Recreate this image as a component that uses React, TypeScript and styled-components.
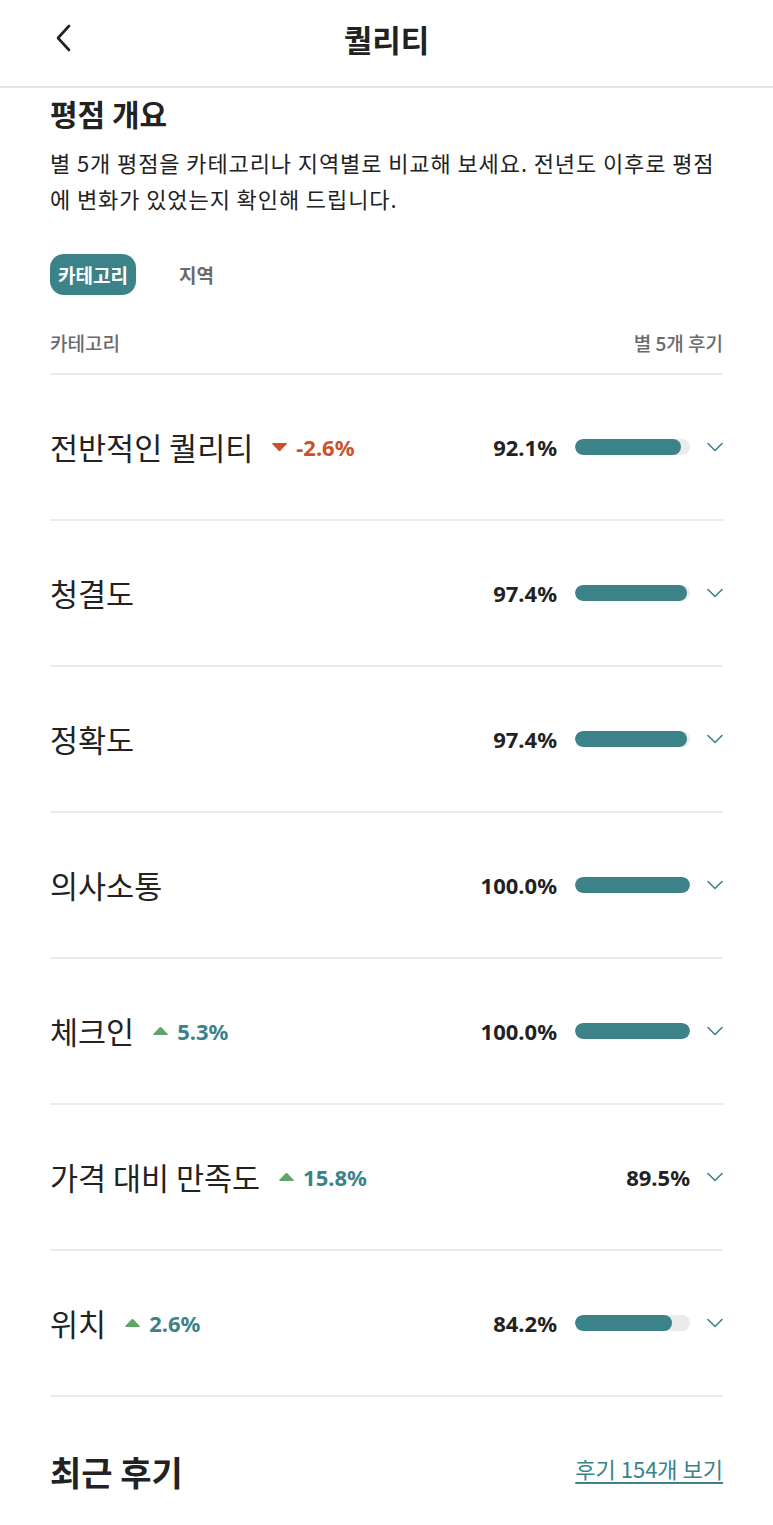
import React from "react";
import styled, { createGlobalStyle } from "styled-components";

const GlobalStyle = createGlobalStyle`
    html, body {
        margin: 0;
        padding: 0;
        background: #ffffff;
    }
    body {
        font-family: "Noto Sans CJK KR", "Noto Sans", sans-serif;
        color: #222222;
    }
`;

const TEAL = "#3b8388";

interface RatingRow {
    label: string;
    percent: number;
    change?: number;
    showBar?: boolean;
}

const rows: RatingRow[] = [
    { label: "전반적인 퀄리티", percent: 92.1, change: -2.6 },
    { label: "청결도", percent: 97.4 },
    { label: "정확도", percent: 97.4 },
    { label: "의사소통", percent: 100.0 },
    { label: "체크인", percent: 100.0, change: 5.3 },
    { label: "가격 대비 만족도", percent: 89.5, change: 15.8, showBar: false },
    { label: "위치", percent: 84.2, change: 2.6 },
];

const Page = styled.div`
    width: 773px;
    min-height: 1525px;
    background: #fff;
`;

const Header = styled.header`
    height: 86px;
    border-bottom: 2px solid #e2e2e2;
    display: flex;
    align-items: center;
    justify-content: center;
    position: relative;
`;

const BackButton = styled.button`
    position: absolute;
    left: 48px;
    top: 22px;
    width: 32px;
    height: 32px;
    border: none;
    background: none;
    padding: 0;
    display: flex;
    align-items: center;
    justify-content: center;
`;

const Title = styled.h1`
    margin: 0 0 10px;
    font-size: 31px;
    font-weight: 700;
    color: #222;
`;

const Content = styled.main`
    padding: 0 50px;
`;

const SectionTitle = styled.h2`
    margin: 4px 0 0;
    font-size: 30px;
    font-weight: 700;
    line-height: 42px;
`;

const Description = styled.p`
    margin: 10px 0 0;
    font-size: 22px;
    letter-spacing: 0.9px;
    line-height: 36px;
    color: #222;
`;

const Tabs = styled.div`
    display: flex;
    align-items: center;
    gap: 43px;
    margin-top: 38px;
`;

const Tab = styled.button<{ $active?: boolean }>`
    border: none;
    font-family: inherit;
    font-size: 19px;
    font-weight: 700;
    height: 41px;
    padding: 0 ${(p) => (p.$active ? "8px" : "0")};
    border-radius: 14px;
    background: ${(p) => (p.$active ? TEAL : "transparent")};
    color: ${(p) => (p.$active ? "#fff" : "#6a6a6a")};
`;

const ColumnHeader = styled.div`
    display: flex;
    justify-content: space-between;
    align-items: center;
    margin-top: 34px;
    padding-bottom: 17px;
    border-bottom: 2px solid #ebebeb;
    font-size: 19px;
    font-weight: 500;
    color: #6a6a6a;
`;

const Row = styled.div`
    height: 144px;
    display: flex;
    align-items: center;
    border-bottom: 2px solid #ebebeb;
`;

const Label = styled.span`
    font-size: 30.5px;
    font-weight: 400;
    color: #222;
`;

const Change = styled.span<{ $down: boolean }>`
    display: flex;
    align-items: center;
    gap: 8px;
    margin-left: 18px;
    font-family: "Noto Sans", sans-serif;
    font-size: 22px;
    font-weight: 700;
    color: ${(p) => (p.$down ? "#c9512b" : TEAL)};
`;

const Spacer = styled.div`
    flex: 1;
`;

const Percent = styled.span`
    font-family: "Noto Sans", sans-serif;
    font-size: 22px;
    font-weight: 700;
    color: #222;
`;

const Track = styled.div`
    width: 115px;
    height: 16px;
    border-radius: 8px;
    background: #ebebeb;
    margin-left: 18px;
    overflow: hidden;
`;

const Fill = styled.div`
    height: 100%;
    background: ${TEAL};
    border-radius: 8px;
`;

const Chevron = styled.span`
    margin-left: 17px;
    display: flex;
    align-items: center;
`;

const Footer = styled.div`
    display: flex;
    justify-content: space-between;
    align-items: center;
    margin-top: 50px;
`;

const FooterTitle = styled.h2`
    margin: 0;
    font-size: 34px;
    font-weight: 700;
`;

const FooterLink = styled.a`
    font-size: 22px;
    color: ${TEAL};
    text-decoration: underline;
    text-underline-offset: 4px;
    margin-top: -8px;
`;

const Triangle: React.FC<{ down: boolean }> = ({ down }) => (
    <svg width="17" height="10" viewBox="0 0 17 10">
        {down ? (
            <path d="M2 1 H15 Q16.5 1 15.5 2.3 L9.6 8.6 Q8.5 9.6 7.4 8.6 L1.5 2.3 Q0.5 1 2 1 Z" fill="#c9512b" />
        ) : (
            <path d="M2 9 H15 Q16.5 9 15.5 7.7 L9.6 1.4 Q8.5 0.4 7.4 1.4 L1.5 7.7 Q0.5 9 2 9 Z" fill="#5ea56a" />
        )}
    </svg>
);

const App: React.FC = () => {
    return (
        <Page>
            <GlobalStyle />
            <Header>
                <BackButton aria-label="뒤로">
                    <svg width="20" height="28" viewBox="0 0 20 28">
                        <path d="M15 2 L4 14 L15 26" fill="none" stroke="#222" strokeWidth="2.6" strokeLinecap="round" strokeLinejoin="round" />
                    </svg>
                </BackButton>
                <Title>퀄리티</Title>
            </Header>
            <Content>
                <SectionTitle>평점 개요</SectionTitle>
                <Description>
                    별 5개 평점을 카테고리나 지역별로 비교해 보세요. 전년도 이후로 평점에 변화가 있었는지 확인해 드립니다.
                </Description>
                <Tabs>
                    <Tab $active>카테고리</Tab>
                    <Tab>지역</Tab>
                </Tabs>
                <ColumnHeader>
                    <span>카테고리</span>
                    <span>별 5개 후기</span>
                </ColumnHeader>
                {rows.map((row) => (
                    <Row key={row.label}>
                        <Label>{row.label}</Label>
                        {row.change !== undefined && (
                            <Change $down={row.change < 0}>
                                <Triangle down={row.change < 0} />
                                {row.change < 0 ? "-" : ""}
                                {Math.abs(row.change).toFixed(1)}%
                            </Change>
                        )}
                        <Spacer />
                        <Percent>{row.percent.toFixed(1)}%</Percent>
                        {row.showBar !== false && (
                            <Track>
                                <Fill style={{ width: `${row.percent}%` }} />
                            </Track>
                        )}
                        <Chevron>
                            <svg width="16" height="10" viewBox="0 0 16 10">
                                <path d="M1 1.5 L8 8.5 L15 1.5" fill="none" stroke={TEAL} strokeWidth="1.6" strokeLinecap="round" strokeLinejoin="round" />
                            </svg>
                        </Chevron>
                    </Row>
                ))}
                <Footer>
                    <FooterTitle>최근 후기</FooterTitle>
                    <FooterLink href="#">후기 154개 보기</FooterLink>
                </Footer>
            </Content>
        </Page>
    );
};

export default App;
